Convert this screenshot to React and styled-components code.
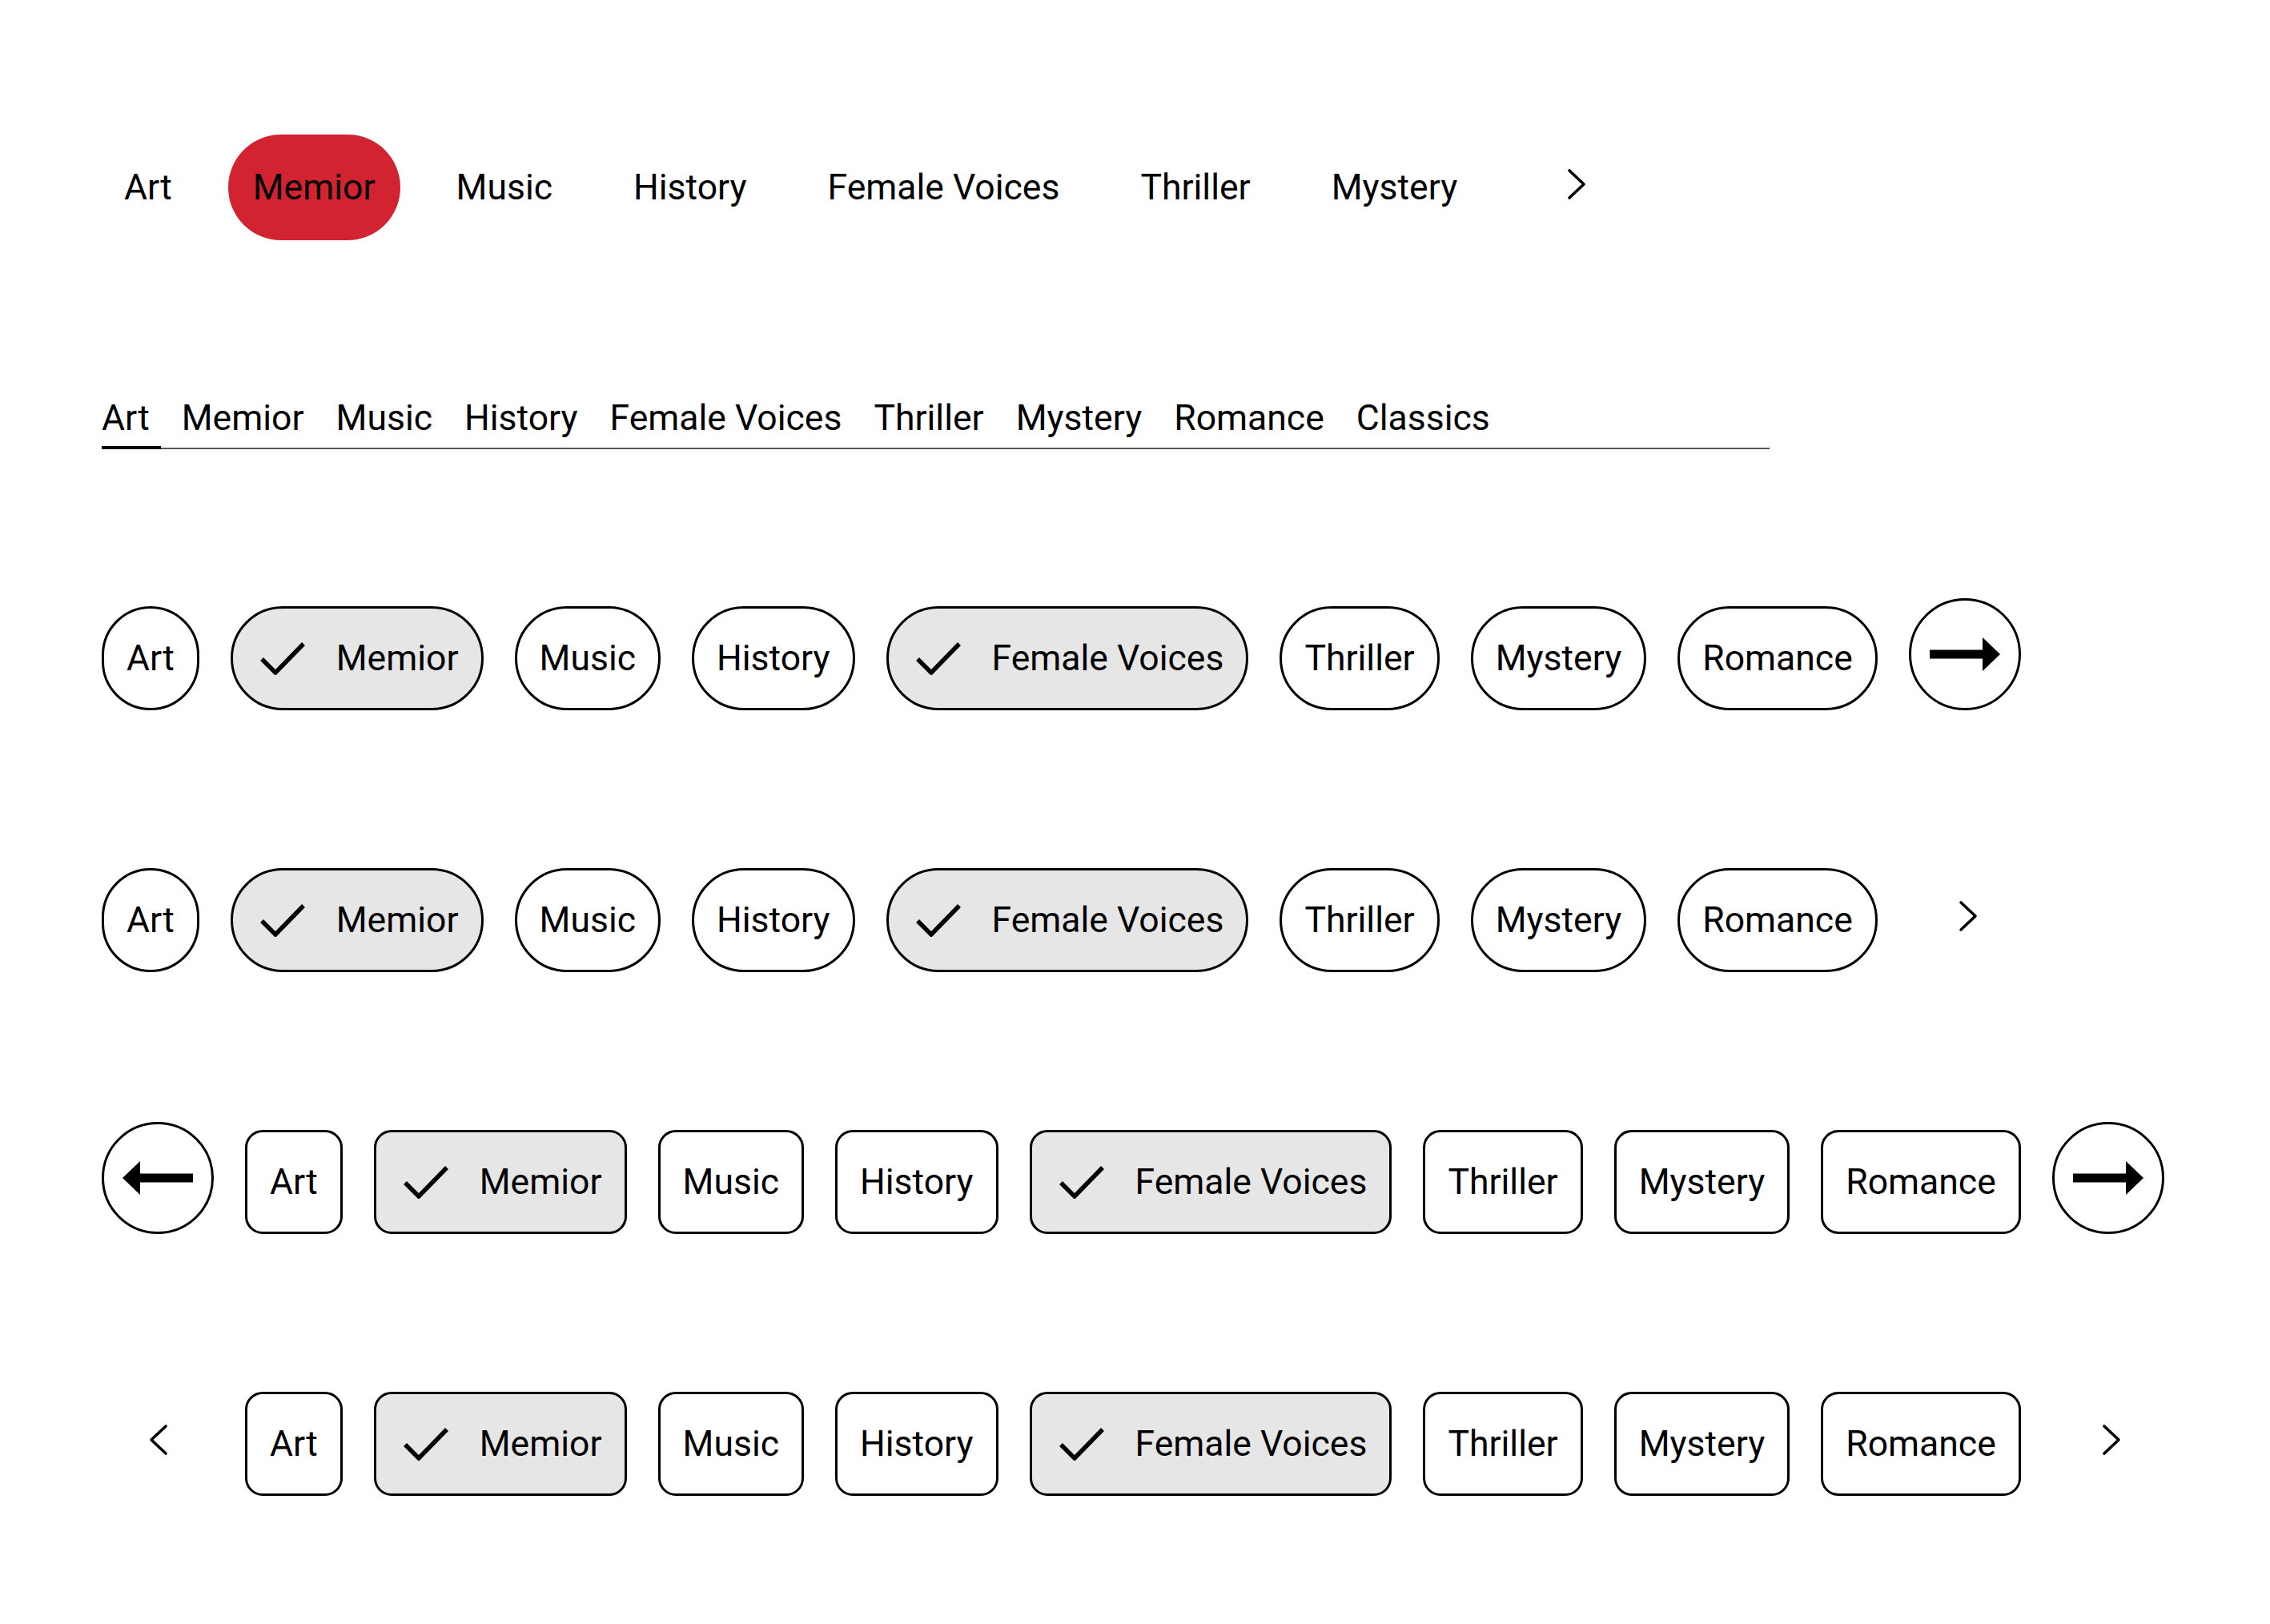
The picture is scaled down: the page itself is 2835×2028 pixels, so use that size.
import React from "react";
import styled, { createGlobalStyle } from "styled-components";

const GlobalStyle = createGlobalStyle`
  html, body {
    margin: 0;
    padding: 0;
    background: #fff;
  }
  body {
    font-family: Roboto, "Liberation Sans", sans-serif;
    color: #000;
  }
  button {
    font-family: inherit;
    color: inherit;
    cursor: pointer;
  }
`;

const Page = styled.main`
  display: flex;
  flex-direction: column;
  align-items: flex-start;
  padding: 160px 0 0 127px;
`;

const NavButton = styled.button`
  box-sizing: border-box;
  width: 140px;
  height: 140px;
  flex: none;
  padding: 0;
  display: flex;
  align-items: center;
  justify-content: center;
  border-radius: 50%;
  border: ${(p) => (p.$outlined ? "3px solid #000" : "none")};
  background: transparent;
`;

/* 1. 빨간 알약 탭 */
const PillBar = styled.nav`
  display: flex;
  align-items: flex-end;
  gap: 39px;
  height: 140px;
  margin-left: -3px;

  & > ${NavButton} {
    margin-left: 5px;
  }
`;

const PillItem = styled.button`
  height: 132px;
  padding: 0 31px;
  border: none;
  border-radius: 66px;
  background: ${(p) => (p.$active ? "#d22331" : "transparent")};
  font-size: 44.5px;
  line-height: 54px;
  display: flex;
  align-items: center;
`;

/* 2. 밑줄 탭 */
const TabList = styled.nav`
  display: flex;
  gap: 26px;
  width: 2083px;
  margin-top: 195px;
  border-bottom: 2px solid #555;
`;

const Tab = styled.button`
  position: relative;
  padding: 0 14px 10px 0;
  border: none;
  background: none;
  font-size: 44.5px;
  line-height: 54px;

  &::after {
    content: "";
    position: absolute;
    left: 0;
    right: 0;
    bottom: -2px;
    height: 4px;
    background: ${(p) => (p.$active ? "#000" : "transparent")};
  }
`;

/* 3~6. 칩 */
const ChipRows = styled.div`
  display: flex;
  flex-direction: column;
  gap: 187px;
  margin-top: 186px;
`;

const ChipRow = styled.div`
  display: flex;
  align-items: flex-end;
  gap: 39px;
  height: 140px;
`;

const Chip = styled.button`
  box-sizing: border-box;
  height: 130px;
  flex: none;
  display: flex;
  align-items: center;
  gap: 38px;
  padding: 0 28px 0 ${(p) => (p.$selected ? "33px" : "28px")};
  border: 3px solid #000;
  border-radius: ${(p) => (p.$shape === "box" ? "22px" : "65px")};
  background: ${(p) => (p.$selected ? "#e6e6e6" : "#fff")};
  font-size: 44.5px;
  line-height: 54px;
  white-space: nowrap;
`;

const CheckIcon = () => (
  <svg width="58" height="42" viewBox="0 0 58 42">
    <polyline
      points="3,22 20,39 55,3"
      fill="none"
      stroke="#000"
      strokeWidth="5.5"
    />
  </svg>
);

const ChevronIcon = ({ dir = "right" }) => (
  <svg width="36" height="42" viewBox="0 0 36 42">
    <polyline
      points={dir === "right" ? "13,4 31,21 13,38" : "28,4 10,21 28,38"}
      fill="none"
      stroke="#000"
      strokeWidth="3.6"
      strokeLinecap="round"
      strokeLinejoin="round"
    />
  </svg>
);

const ArrowIcon = ({ dir = "right" }) => (
  <svg width="88" height="42" viewBox="0 0 88 42">
    <path
      d={
        dir === "right"
          ? "M0 15.5 H66 V0 L88 21 L66 42 V26.5 H0 Z"
          : "M88 15.5 H22 V0 L0 21 L22 42 V26.5 H88 Z"
      }
      fill="#000"
    />
  </svg>
);

const pillTabs = ["Art", "Memior", "Music", "History", "Female Voices", "Thriller", "Mystery"];
const lineTabs = [...pillTabs, "Romance", "Classics"];
const genres = [...pillTabs, "Romance"];
const selected = ["Memior", "Female Voices"];

const rows = [
  { shape: "pill", left: null, right: "arrow" },
  { shape: "pill", left: null, right: "chevron" },
  { shape: "box", left: "arrow", right: "arrow" },
  { shape: "box", left: "chevron", right: "chevron" },
];

const Nav = ({ kind, dir }) => (
  <NavButton $outlined={kind === "arrow"} aria-label={dir}>
    {kind === "arrow" ? <ArrowIcon dir={dir} /> : <ChevronIcon dir={dir} />}
  </NavButton>
);

const App = () => {
  return (
    <>
      <GlobalStyle />
      <Page>
        <PillBar>
          {pillTabs.map((t) => (
            <PillItem key={t} $active={t === "Memior"}>
              {t}
            </PillItem>
          ))}
          <Nav kind="chevron" dir="right" />
        </PillBar>

        <TabList>
          {lineTabs.map((t) => (
            <Tab key={t} $active={t === "Art"}>
              {t}
            </Tab>
          ))}
        </TabList>

        <ChipRows>
          {rows.map((row, i) => (
            <ChipRow key={i}>
              {row.left && <Nav kind={row.left} dir="left" />}
              {genres.map((g) => {
                const isOn = selected.includes(g);
                return (
                  <Chip key={g} $shape={row.shape} $selected={isOn}>
                    {isOn && <CheckIcon />}
                    {g}
                  </Chip>
                );
              })}
              {row.right && <Nav kind={row.right} dir="right" />}
            </ChipRow>
          ))}
        </ChipRows>
      </Page>
    </>
  );
};

export default App;
